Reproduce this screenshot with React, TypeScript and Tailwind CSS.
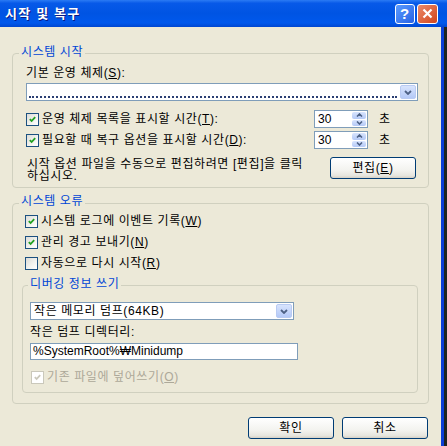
import React from "react";

function Check({ checked, disabled }: { checked?: boolean; disabled?: boolean }) {
  return (
    <span
      className={`w-[13px] h-[13px] border shrink-0 flex items-center justify-center ${
        disabled
          ? "border-[#CAC8BB] bg-white"
          : "border-[#1C5180] bg-[linear-gradient(135deg,#DCDCD7_0%,#F4F4F0_60%,#FFFFFF_100%)]"
      }`}
    >
      {checked && (
        <svg width="7" height="7" viewBox="0 0 7 7">
          <path d="M0.8 3.2 L2.6 5 L6.2 1.2" fill="none" stroke={disabled ? "#CAC8BB" : "#21A121"} strokeWidth="1.8" />
        </svg>
      )}
    </span>
  );
}

function CheckRow({ checked, disabled, children }: { checked?: boolean; disabled?: boolean; children: React.ReactNode }) {
  return (
    <div className={`flex items-center gap-[3px] h-[16px] ${disabled ? "text-[#ACA899]" : ""}`}>
      <Check checked={checked} disabled={disabled} />
      <span className="leading-[14px] whitespace-nowrap">{children}</span>
    </div>
  );
}

function DropButton() {
  return (
    <div className="w-[16px] h-full rounded-[2px] border border-[#B9CBF3] bg-[linear-gradient(to_bottom,#D8E4FD,#B4C9F7)] flex items-center justify-center">
      <svg width="8" height="5" viewBox="0 0 8 5">
        <path d="M1 1 L4 4 L7 1" fill="none" stroke="#4D6185" strokeWidth="1.8" />
      </svg>
    </div>
  );
}

function Spin() {
  return (
    <div className="w-[54px] h-[18px] border border-[#7F9DB9] bg-white flex">
      <span className="flex-1 pl-[3px] leading-[16px] tracking-normal">30</span>
      <div className="w-[16px] flex flex-col gap-[1px] p-[1px]">
        <div className="flex-1 rounded-[2px] bg-[linear-gradient(to_bottom,#D8E4FD,#B4C9F7)] flex items-center justify-center">
          <svg width="7" height="4" viewBox="0 0 7 4">
            <path d="M1 3.5 L3.5 1 L6 3.5" fill="none" stroke="#4D6185" strokeWidth="1.6" />
          </svg>
        </div>
        <div className="flex-1 rounded-[2px] bg-[linear-gradient(to_bottom,#D8E4FD,#B4C9F7)] flex items-center justify-center">
          <svg width="7" height="4" viewBox="0 0 7 4">
            <path d="M1 0.5 L3.5 3 L6 0.5" fill="none" stroke="#4D6185" strokeWidth="1.6" />
          </svg>
        </div>
      </div>
    </div>
  );
}

function XpButton({ children }: { children: React.ReactNode }) {
  return (
    <button className="w-[86px] h-[22px] shrink-0 rounded-[3px] border border-[#003C74] bg-[linear-gradient(to_bottom,#FFFFFF_0%,#F3F3EF_60%,#E6E5DE_88%,#D6D0C5_100%)] text-[12px] leading-[14px] flex items-center justify-center">
      {children}
    </button>
  );
}

export default function App() {
  return (
    <div className="w-[447px] h-[446px] flex flex-col overflow-hidden text-[12px] tracking-[0.6px] text-black font-['Liberation_Sans','Noto_Sans_CJK_KR',sans-serif]">
      {/* Title bar */}
      <div className="h-[27px] shrink-0 flex items-center justify-between pl-[5px] pr-[9px] bg-[linear-gradient(to_bottom,#2B7BF4_0%,#0759E8_12%,#0054E3_50%,#0058EC_85%,#0046D0_100%)]">
        <span className="text-white font-bold text-[13px] leading-[16px] tracking-[1.2px] [text-shadow:1px_1px_0_#0A1883]">시작 및 복구</span>
        <div className="flex gap-[2px]">
          <div className="w-[20px] h-[20px] rounded-[3px] border border-white bg-[linear-gradient(135deg,#5A9BFF,#2762E4)] flex items-center justify-center text-white font-bold text-[15px] leading-none">?</div>
          <div className="w-[21px] h-[20px] rounded-[3px] border border-white bg-[linear-gradient(135deg,#EB8A6A,#D2461C)] flex items-center justify-center">
            <svg width="11" height="11" viewBox="0 0 11 11">
              <path d="M1.5 1.5 L9.5 9.5 M9.5 1.5 L1.5 9.5" stroke="white" strokeWidth="2.2" />
            </svg>
          </div>
        </div>
      </div>

      <div className="flex flex-1">
        <div className="w-[441px] bg-[#ECE9D8] flex flex-col">
          {/* System startup */}
          <fieldset className="mt-[16px] mx-[12px] border border-[#D0D0BF] rounded-[4px]">
            <legend className="ml-[6px] px-[2px] pt-[2px] pb-[5px] leading-[14px] text-[#0046D5]">시스템 시작</legend>
            <div className="pl-[13px] pr-[10px] pt-[1px] pb-[8px] flex flex-col">
              <div className="h-[15px] leading-[16px]">
                기본 운영 체제(<u>S</u>):
              </div>
              <div className="mt-[3px] h-[18px] border border-[#7F9DB9] bg-white flex p-[1px]">
                <div className="flex-1 flex items-end pl-[1px] pr-[3px] pb-[1px]">
                  <div className="w-full border-b-2 border-dotted border-[#2B3F73]" />
                </div>
                <DropButton />
              </div>
              <div className="mt-[9px] h-[18px] flex items-center">
                <div className="w-[288px]">
                  <CheckRow checked>
                    운영 체제 목록을 표시할 시간(<u>T</u>):
                  </CheckRow>
                </div>
                <Spin />
                <span className="ml-[11px]">초</span>
              </div>
              <div className="mt-[3px] h-[18px] flex items-center">
                <div className="w-[288px]">
                  <CheckRow checked>
                    필요할 때 복구 옵션을 표시할 시간(<u>D</u>):
                  </CheckRow>
                </div>
                <Spin />
                <span className="ml-[11px]">초</span>
              </div>
              <div className="mt-[8px] h-[22px] flex items-start justify-between pl-[1px] pr-[2px]">
                <p className="mt-[1px] leading-[12px]">
                  시작 옵션 파일을 수동으로 편집하려면 [편집]을 클릭
                  <br />
                  하십시오.
                </p>
                <XpButton>
                  편집(<u>E</u>)
                </XpButton>
              </div>
            </div>
          </fieldset>

          {/* System failure */}
          <fieldset className="mt-[5px] mx-[12px] border border-[#D0D0BF] rounded-[4px]">
            <legend className="ml-[6px] px-[2px] pt-[1px] pb-[5px] leading-[14px] text-[#0046D5]">시스템 오류</legend>
            <div className="pl-[9px] pr-[10px] pb-[10px] flex flex-col">
              <div className="ml-[3px] flex flex-col gap-[5px]">
                <CheckRow checked>
                  시스템 로그에 이벤트 기록(<u>W</u>)
                </CheckRow>
                <CheckRow checked>
                  관리 경고 보내기(<u>N</u>)
                </CheckRow>
                <CheckRow>
                  자동으로 다시 시작(<u>R</u>)
                </CheckRow>
              </div>

              <fieldset className="mt-[5px] border border-[#D0D0BF] rounded-[4px]">
                <legend className="ml-[5px] px-[2px] pt-[1px] pb-[3px] leading-[14px] text-[#0046D5]">디버깅 정보 쓰기</legend>
                <div className="pl-[7px] pb-[7px] flex flex-col items-start">
                  <div className="mt-[8px] w-[264px] h-[18px] border border-[#7F9DB9] bg-white flex p-[1px]">
                    <span className="flex-1 pl-[2px] leading-[15px]">작은 메모리 덤프(64KB)</span>
                    <DropButton />
                  </div>
                  <div className="mt-[5px] h-[13px] leading-[15px]">작은 덤프 디렉터리:</div>
                  <div className="mt-[5px] w-[268px] h-[17px] border border-[#7F9DB9] bg-white pl-[2px] leading-[15px] tracking-normal">
                    %SystemRoot%₩Minidump
                  </div>
                  <div className="mt-[9px] ml-[1px]">
                    <CheckRow checked disabled>
                      기존 파일에 덮어쓰기(<u>O</u>)
                    </CheckRow>
                  </div>
                </div>
              </fieldset>
            </div>
          </fieldset>

          <div className="mt-[13px] pr-[13px] flex justify-end gap-[8px]">
            <XpButton>확인</XpButton>
            <XpButton>취소</XpButton>
          </div>
        </div>
        <div className="w-[3px] bg-[#0B3ED6]" />
        <div className="flex-1 bg-[#1E2420]" />
      </div>
    </div>
  );
}
